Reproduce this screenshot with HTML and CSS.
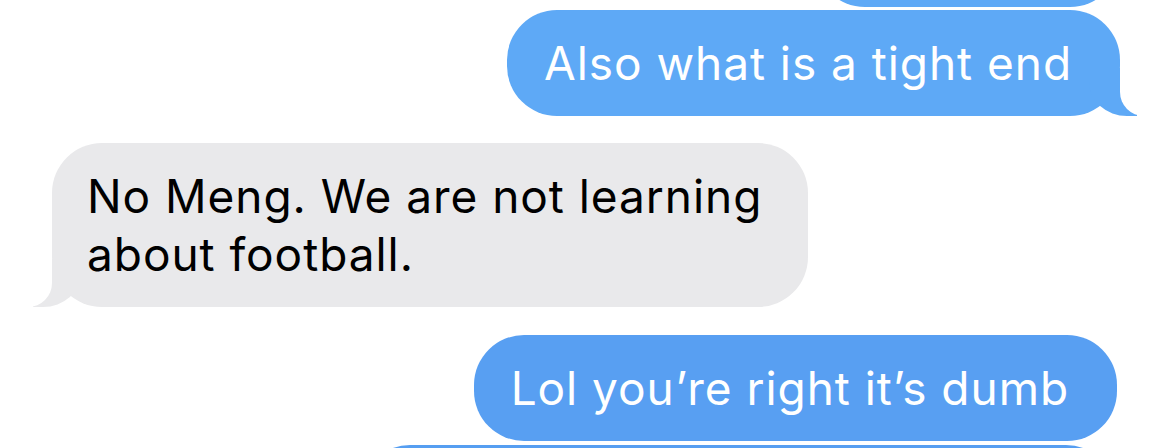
FILE: index.html
```html
<!DOCTYPE html>
<html lang="en">

<head>
    <meta charset="UTF-8">
    <meta name="viewport" content="width=device-width, initial-scale=1.0">
    <title>Messages</title>
    <link rel="stylesheet" href="styles.css">
</head>

<body>
    <div class="screen">
        <div class="thread">
            <div class="bubble out first"></div>
            <div class="bubble out tail">Also what is a tight end</div>
            <div class="bubble in tail">No Meng. We are not learning about football.</div>
            <div class="bubble out">Lol you’re right it’s dumb</div>
            <div class="bubble out next"></div>
        </div>
    </div>
</body>

</html>
```

FILE: styles.css
```css
* {
    margin: 0;
    padding: 0;
    box-sizing: border-box;
}

body {
    background: #fff;
    font-family: Inter, "Noto Sans", sans-serif;
}

.screen {
    width: 1170px;
    height: 448px;
    overflow: hidden;
}

/* scrolled list, first bubble is cut at the top */
.thread {
    display: flex;
    flex-direction: column;
    margin-top: -99px;
    padding: 0 50px 0 52px;
}

.bubble {
    position: relative;
    max-width: 756px;
    padding: 24px 48px 24px 36px;
    border-radius: 50px;
    font-size: 46px;
    line-height: 58px;
    letter-spacing: 0.95px;
}

.bubble.out {
    align-self: flex-end;
    background: #5ea9f6;
    color: #fff;
    margin-top: 3px;
    padding-left: 37px;
}

.bubble.in {
    align-self: flex-start;
    width: 756px;
    background: #e9e9eb;
    color: #000;
    margin-top: 27px;
    padding-left: 35px;
    padding-right: 28px;
}

.bubble.in + .bubble.out {
    margin-top: 28px;
}

.bubble.out.first {
    width: 305px;
    height: 106px;
    margin-top: 0;
}

.bubble.out.next {
    width: 764px;
    height: 106px;
    margin-right: 4px;
    margin-top: 4px;
    background: #569ef1;
}

.thread .bubble:nth-child(4) {
    margin-right: 3px;
    background: #589ff2;
}

/* tails */
.bubble.tail::before,
.bubble.tail::after {
    content: "";
    position: absolute;
    bottom: 0;
    height: 48px;
}

.bubble.out.tail::before {
    right: -17px;
    width: 48px;
    background: #5ea9f6;
    border-bottom-left-radius: 38px 34px;
}

.bubble.out.tail::after {
    right: -62px;
    width: 62px;
    background: #fff;
    border-bottom-left-radius: 24px;
}

.bubble.in.tail::before {
    left: -19px;
    width: 48px;
    background: #e9e9eb;
    border-bottom-right-radius: 38px 34px;
}

.bubble.in.tail::after {
    left: -62px;
    width: 62px;
    background: #fff;
    border-bottom-right-radius: 24px;
}
```
